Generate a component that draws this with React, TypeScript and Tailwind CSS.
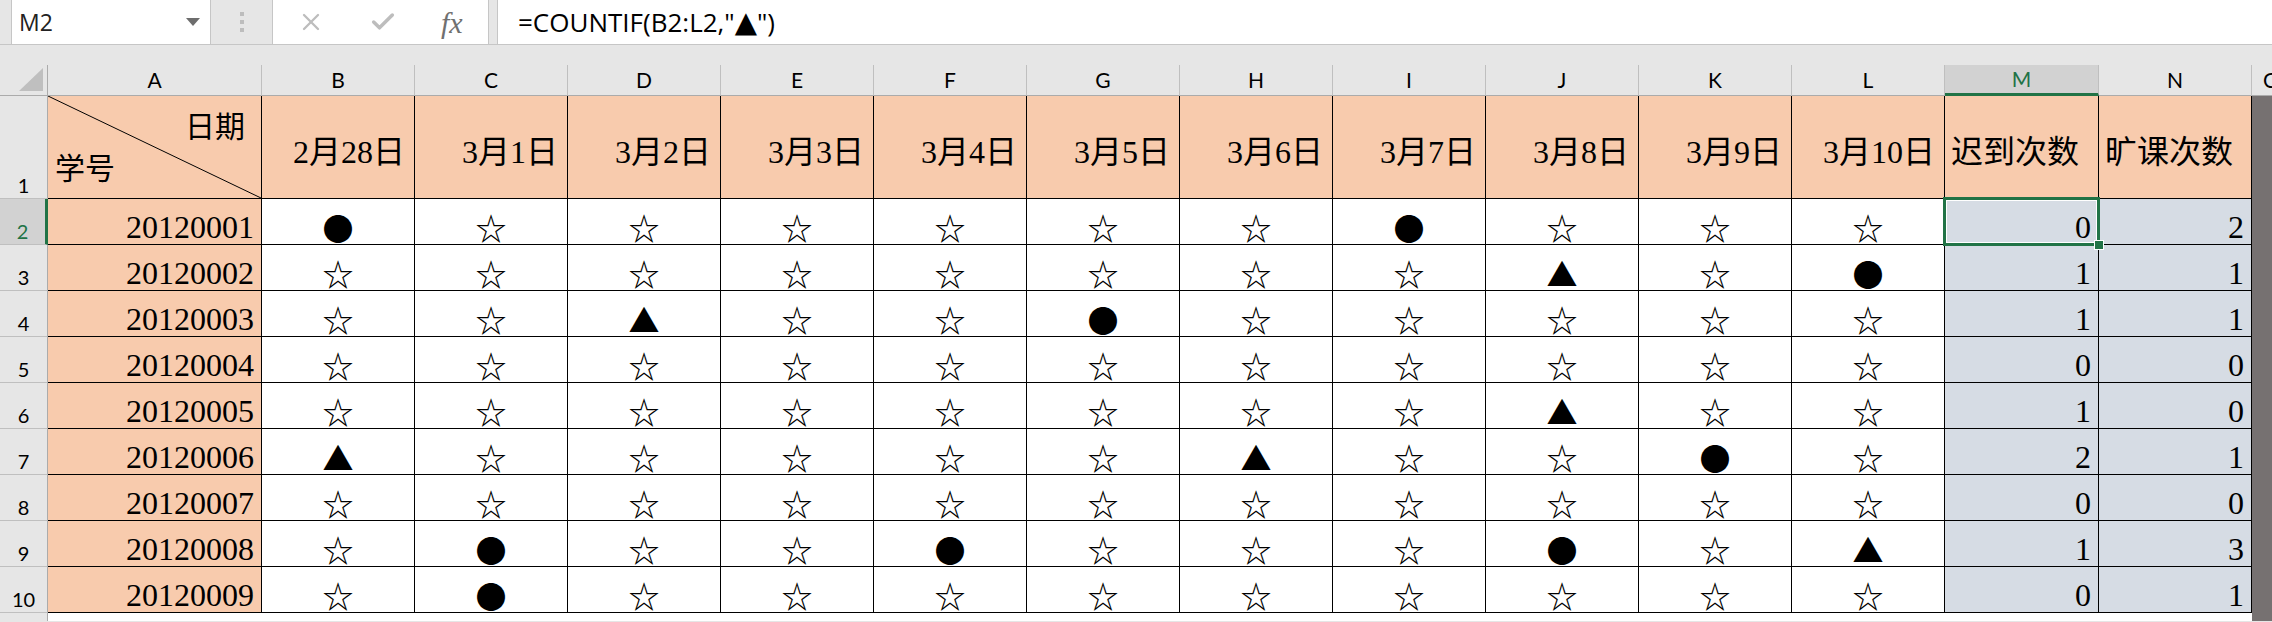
import React from "react";
import { X, Check } from "lucide-react";

const letters = ["B", "C", "D", "E", "F", "G", "H", "I", "J", "K", "L"];
const dates = ["2月28日", "3月1日", "3月2日", "3月3日", "3月4日", "3月5日", "3月6日", "3月7日", "3月8日", "3月9日", "3月10日"];

const rows: [string, string][] = [
    ["20120001", "●☆☆☆☆☆☆●☆☆☆"],
    ["20120002", "☆☆☆☆☆☆☆☆▲☆●"],
    ["20120003", "☆☆▲☆☆●☆☆☆☆☆"],
    ["20120004", "☆☆☆☆☆☆☆☆☆☆☆"],
    ["20120005", "☆☆☆☆☆☆☆☆▲☆☆"],
    ["20120006", "▲☆☆☆☆☆▲☆☆●☆"],
    ["20120007", "☆☆☆☆☆☆☆☆☆☆☆"],
    ["20120008", "☆●☆☆●☆☆☆●☆▲"],
    ["20120009", "☆●☆☆☆☆☆☆☆☆☆"],
];

const serif = "font-['Liberation_Serif','Noto_Sans_CJK_SC',serif]";
const ui = "font-['Lato','Noto_Sans',sans-serif]";

const ColHead = ({ label, active }: { label: string; active?: boolean }) => (
    <div
        className={
            active
                ? `flex items-center justify-center bg-[#d2d2d2] border-r border-[#bfbfbf] border-b-[3px] border-b-[#217346] text-[#217346] text-[21px] ${ui}`
                : `flex items-center justify-center border-r border-[#bfbfbf] border-b border-b-[#ababab] text-[21px] text-black ${ui}`
        }
    >
        {label}
    </div>
);

const RowHead = ({ n, active }: { n: number; active?: boolean }) => (
    <div
        className={
            active
                ? `flex items-end justify-center pb-[3px] bg-[#d2d2d2] border-b border-[#bfbfbf] border-r-[3px] border-r-[#217346] text-[#217346] text-[20px] leading-none ${ui}`
                : `flex items-end justify-center pb-[3px] border-b border-[#bfbfbf] border-r border-r-[#ababab] text-[20px] text-black leading-none ${ui}`
        }
    >
        {n}
    </div>
);

const Symbol = ({ s }: { s: string }) => (
    <div className="flex items-end justify-center pb-[2px] border-r border-b border-black bg-white">
        <span className="font-['Noto_Sans_CJK_SC',sans-serif] text-[31px] leading-none">{s}</span>
    </div>
);

export default function App() {
    return (
        <div className="w-[2272px] h-[622px] overflow-hidden bg-[#e6e6e6]">
            {/* formula bar */}
            <div className="flex h-[45px] border-b border-[#c6c6c6]">
                <div className="ml-[11px] w-[200px] bg-white border-x border-[#c6c6c6] flex items-center justify-between pl-[7px] pr-[10px]">
                    <span className="font-['Open_Sans',sans-serif] text-[23px] text-[#222]">M2</span>
                    <svg width="14" height="8" viewBox="0 0 14 8">
                        <path d="M0 0H14L7 8Z" fill="#6d6d6d" />
                    </svg>
                </div>
                <div className="w-[61px] flex flex-col items-center justify-center gap-[4px]">
                    <div className="w-[4px] h-[4px] bg-[#bdbdbd]" />
                    <div className="w-[4px] h-[4px] bg-[#bdbdbd]" />
                    <div className="w-[4px] h-[4px] bg-[#bdbdbd]" />
                </div>
                <div className="w-[217px] bg-white border-x border-[#c6c6c6] flex items-center pl-[24px] gap-[44px]">
                    <X size={28} strokeWidth={2} color="#bdbdbd" />
                    <Check size={28} strokeWidth={3} color="#bdbdbd" />
                    <span className="font-['Liberation_Serif',serif] italic text-[30px] text-[#707070]">fx</span>
                </div>
                <div className="ml-[8px] flex-1 bg-white border-l border-[#c6c6c6] flex items-center pl-[20px]">
                    <span className="font-['Open_Sans',sans-serif] text-[26px] leading-none text-black">
                        =COUNTIF(B2:L2,"<span className="font-['DejaVu_Sans',sans-serif] text-[29px] leading-none">▲</span>")
                    </span>
                </div>
            </div>
            <div className="h-[20px]" />

            {/* sheet */}
            <div className="grid grid-cols-[48px_214px_repeat(11,153px)_154px_153px_20px] grid-rows-[31px_103px_repeat(9,46px)_8px]">
                {/* column headers */}
                <div className="flex items-end justify-end pr-[4px] pb-[4px] border-r border-b border-[#ababab]">
                    <svg width="24" height="23" viewBox="0 0 24 23">
                        <path d="M24 0V23H0Z" fill="#bfbfbf" />
                    </svg>
                </div>
                <ColHead label="A" />
                {letters.map((l) => (
                    <ColHead key={l} label={l} />
                ))}
                <ColHead label="M" active />
                <ColHead label="N" />
                <div className={`flex items-center pl-[11px] overflow-hidden border-b border-[#ababab] text-[21px] ${ui}`}>O</div>

                {/* row 1 */}
                <RowHead n={1} />
                <div className={`relative flex flex-col justify-between bg-[#f8cbad] border-r border-b border-black ${serif} text-[30px] leading-none pt-[16px] pb-[14px] pl-[7px] pr-[16px]`}>
                    <svg className="absolute inset-0" width="100%" height="100%" preserveAspectRatio="none" viewBox="0 0 213 102">
                        <line x1="0" y1="0" x2="213" y2="102" stroke="black" strokeWidth="1" />
                    </svg>
                    <span className="self-end">日期</span>
                    <span className="self-start">学号</span>
                </div>
                {dates.map((d) => (
                    <div key={d} className={`flex items-end justify-end pr-[9px] pb-[30px] bg-[#f8cbad] border-r border-b border-black ${serif} text-[32px] leading-none`}>
                        {d}
                    </div>
                ))}
                <div className={`flex items-end justify-start pl-[6px] pb-[30px] bg-[#f8cbad] border-r border-b border-black ${serif} text-[32px] leading-none`}>迟到次数</div>
                <div className={`flex items-end justify-start pl-[6px] pb-[30px] bg-[#f8cbad] border-r border-b border-black ${serif} text-[32px] leading-none`}>旷课次数</div>
                <div className="bg-[#767171]" />

                {/* data rows */}
                {rows.map(([id, marks], i) => {
                    const chars = Array.from(marks);
                    const late = chars.filter((c) => c === "▲").length;
                    const absent = chars.filter((c) => c === "●").length;
                    return (
                        <React.Fragment key={id}>
                            <RowHead n={i + 2} active={i === 0} />
                            <div className={`flex items-end justify-end pr-[7px] pb-[1px] bg-[#f8cbad] border-r border-b border-black ${serif} text-[32px] leading-none`}>{id}</div>
                            {chars.map((c, j) => (
                                <Symbol key={j} s={c} />
                            ))}
                            <div className={`relative flex items-end justify-end pr-[7px] pb-[1px] bg-[#d6dce4] border-r border-b border-black ${serif} text-[32px] leading-none`}>
                                {late}
                                {i === 0 && (
                                    <>
                                        <div className="absolute -left-[2px] -top-[2px] -right-[2px] -bottom-[2px] border-[3px] border-[#217346] shadow-[inset_0_0_0_1px_white] z-10" />
                                        <div className="absolute -right-[6px] -bottom-[6px] w-[10px] h-[10px] bg-[#217346] border border-white z-20" />
                                    </>
                                )}
                            </div>
                            <div className={`flex items-end justify-end pr-[7px] pb-[1px] bg-[#d6dce4] border-r border-b border-black ${serif} text-[32px] leading-none`}>{absent}</div>
                            <div className="bg-[#767171]" />
                        </React.Fragment>
                    );
                })}

                {/* row 11 (cut) */}
                <div className="border-r border-[#ababab]" />
                {Array.from({ length: 14 }).map((_, k) => (
                    <div key={k} className="bg-white" />
                ))}
                <div className="bg-[#767171]" />
            </div>
        </div>
    );
}
